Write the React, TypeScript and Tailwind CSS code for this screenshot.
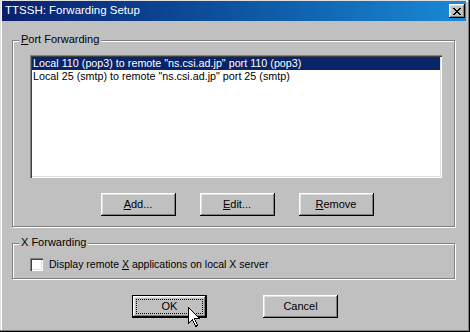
const raised =
  "shadow-[inset_-1px_-1px_0_#000,inset_1px_1px_0_#fff,inset_-2px_-2px_0_#808080,inset_2px_2px_0_#dfdfdf]"

function Button({ children, isDefault }: { children: React.ReactNode; isDefault?: boolean }) {
  if (isDefault) {
    return (
      <div className="w-[75px] h-[23px] border border-black bg-[#c0c0c0]">
        <div className={`w-full h-full p-[3px] ${raised}`}>
          <div className="w-full h-full border border-dotted border-black flex items-center justify-center text-[11px] leading-none">
            {children}
          </div>
        </div>
      </div>
    )
  }
  return (
    <div className={`w-[75px] h-[23px] bg-[#c0c0c0] flex items-center justify-center text-[11px] leading-none ${raised}`}>
      {children}
    </div>
  )
}

function GroupBox({ label, children, className }: { label: React.ReactNode; children: React.ReactNode; className: string }) {
  return (
    <div className={`relative ml-[10px] w-[443px] border border-[#808080] shadow-[1px_1px_0_#fff,inset_1px_1px_0_#fff] ${className}`}>
      {/* label sits on top of the etched line */}
      <span className="absolute -top-[8px] left-[6px] bg-[#c0c0c0] px-[2px] text-[11px] leading-[13px]">{label}</span>
      {children}
    </div>
  )
}

export default function App() {
  const rules = [
    'Local 110 (pop3) to remote "ns.csi.ad.jp" port 110 (pop3)',
    'Local 25 (smtp) to remote "ns.csi.ad.jp" port 25 (smtp)',
  ]

  return (
    <div className="relative w-[470px] h-[332px] overflow-hidden bg-[#c0c0c0] pt-[1px] pl-[2px] pr-[4px] text-black font-['Liberation_Sans',Arial,sans-serif] shadow-[inset_-1px_-1px_0_#000,inset_-2px_-2px_0_#808080,inset_1px_1px_0_#dfdfdf,inset_2px_2px_0_#fff]">
      {/* Title bar */}
      <div className="h-[20px] flex items-center justify-between bg-linear-to-r from-[#0a1f6e] to-[#1a8ad6] pl-[3px] pr-[1px]">
        <span className="text-white text-[11.5px] leading-none">TTSSH: Forwarding Setup</span>
        <div className={`w-[16px] h-[14px] bg-[#c0c0c0] flex items-center justify-center ${raised}`}>
          <svg width="8" height="7" viewBox="0 0 8 7" shapeRendering="crispEdges">
            <path d="M0 0h2v1h1v1h2V1h1V0h2v1H7v1H6v1H5v1h1v1h1v1h1v1H6V6H5V5H3v1H2v1H0V6h1V5h1V4h1V3H2V2H1V1H0z" fill="#000" />
          </svg>
        </div>
      </div>

      {/* Port forwarding group */}
      <GroupBox
        className="mt-[19px] pt-[14px] pl-[17px] pr-[12px] pb-[10px]"
        label={<><u>P</u>ort Forwarding</>}
      >
        <div className="h-[123px] bg-white p-[2px] shadow-[inset_1px_1px_0_#808080,inset_2px_2px_0_#404040,inset_-1px_-1px_0_#fff,inset_-2px_-2px_0_#dfdfdf]">
          {rules.map((r, i) => (
            <div
              key={r}
              className={`h-[13px] pl-[1px] text-[10.75px] leading-[13px] whitespace-nowrap ${i === 0 ? "bg-[#0a246a] text-white" : ""}`}
            >
              {r}
            </div>
          ))}
        </div>
        <div className="mt-[15px] flex justify-center gap-[24px] pl-[2px]">
          <Button><u>A</u>dd...</Button>
          <Button><u>E</u>dit...</Button>
          <Button><u>R</u>emove</Button>
        </div>
      </GroupBox>

      {/* X forwarding group */}
      <GroupBox className="mt-[16px] h-[36px] pt-[14px] pl-[17px]" label="X Forwarding">
        <div className="flex items-center gap-[6px]">
          <div className="w-[13px] h-[13px] bg-white shadow-[inset_1px_1px_0_#808080,inset_2px_2px_0_#404040,inset_-1px_-1px_0_#fff,inset_-2px_-2px_0_#dfdfdf]" />
          <span className="text-[10.5px] leading-[13px]">
            Display remote <u>X</u> applications on local X server
          </span>
        </div>
      </GroupBox>

      {/* Dialog buttons */}
      <div className="mt-[16px] flex justify-center gap-[56px] pl-[2px]">
        <Button isDefault>OK</Button>
        <Button>Cancel</Button>
      </div>

      {/* mouse pointer */}
      <svg className="absolute left-[188px] top-[307px]" width="13" height="20" viewBox="0 0 13 20" shapeRendering="crispEdges">
        <path d="M0.5 0.5V16.5L4.5 12.5L7.5 19.5L9.5 18.5L6.5 11.5H11.5Z" fill="#fff" stroke="#000" strokeWidth="1" />
      </svg>
    </div>
  )
}
